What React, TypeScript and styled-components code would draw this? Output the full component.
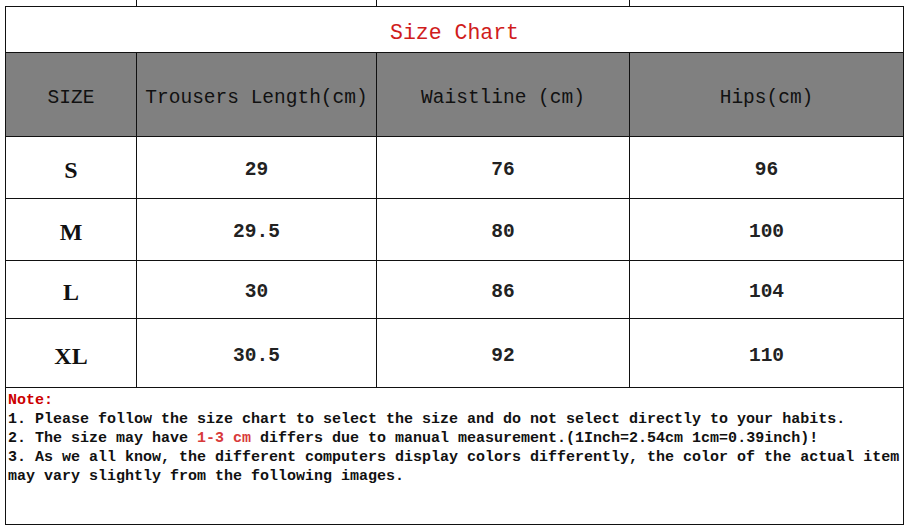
import React from "react";
import styled, { createGlobalStyle } from "styled-components";

const GlobalStyle = createGlobalStyle`
    html, body {
        margin: 0;
        padding: 0;
        background: #fff;
    }
`;

const rows = [
    { size: "S", length: "29", waist: "76", hips: "96", height: 62 },
    { size: "M", length: "29.5", waist: "80", hips: "100", height: 62 },
    { size: "L", length: "30", waist: "86", hips: "104", height: 58 },
    { size: "XL", length: "30.5", waist: "92", hips: "110", height: 69 },
];

const App = () => {
    return (
        <>
            <GlobalStyle />
            <Chart $rows={rows.map(r => r.height)}>
                <StripCell />
                <StripCell />
                <StripCell />
                <StripCell $last />

                <TitleCell>Size Chart</TitleCell>

                <HeadCell $first>SIZE</HeadCell>
                <HeadCell>Trousers Length(cm)</HeadCell>
                <HeadCell>Waistline (cm)</HeadCell>
                <HeadCell>Hips(cm)</HeadCell>

                {rows.map(r => (
                    <React.Fragment key={r.size}>
                        <SizeCell $first>{r.size}</SizeCell>
                        <ValueCell>{r.length}</ValueCell>
                        <ValueCell>{r.waist}</ValueCell>
                        <ValueCell>{r.hips}</ValueCell>
                    </React.Fragment>
                ))}

                <NoteCell>
                    <NoteHead>Note:</NoteHead>
                    <div>1. Please follow the size chart to select the size and do not select directly to your habits.</div>
                    <div>2. The size may have <Red>1-3 cm</Red> differs due to manual measurement.(1Inch=2.54cm 1cm=0.39inch)!</div>
                    <div>3. As we all know, the different computers display colors differently, the color of the actual item may vary slightly from the following images.</div>
                </NoteCell>
            </Chart>
        </>
    );
};

const Chart = styled.div<{ $rows: number[] }>`
    display: grid;
    grid-template-columns: 132px 240px 253px 274px;
    grid-template-rows: 7px 46px 84px ${props => props.$rows.map(h => `${h}px`).join(" ")} 137px;
    margin-left: 5px;
    width: 899px;
    font-family: "Liberation Mono", "DejaVu Sans Mono", monospace;
    color: #111;
`;

const Cell = styled.div<{ $first?: boolean; $last?: boolean }>`
    box-sizing: border-box;
    display: flex;
    align-items: center;
    justify-content: center;
    border-bottom: 1px solid #111;
    border-right: 1px solid #111;
    border-left: ${props => props.$first ? "1px solid #111" : "none"};
`;

const StripCell = styled(Cell)`
    border-right: ${props => props.$last ? "none" : "1px solid #111"};
`;

const TitleCell = styled(Cell)`
    grid-column: 1 / -1;
    border-left: 1px solid #111;
    padding-top: 6px;
    font-size: 21.5px;
    color: #d01c1c;
`;

const HeadCell = styled(Cell)`
    background-color: #808080;
    padding-top: 6px;
    font-size: 19.5px;
    color: #111;
    white-space: nowrap;
`;

const SizeCell = styled(Cell)`
    padding-top: 6px;
    font-family: "Liberation Serif", serif;
    font-size: 24px;
    font-weight: bold;
`;

const ValueCell = styled(Cell)`
    padding-top: 5px;
    font-size: 19.5px;
    font-weight: bold;
    color: #222;
`;

const NoteCell = styled(Cell)`
    grid-column: 1 / -1;
    border-left: 1px solid #111;
    flex-direction: column;
    align-items: stretch;
    justify-content: flex-start;
    padding: 3px 2px 0 2px;
    font-size: 15px;
    font-weight: bold;
    line-height: 19px;
    color: #111;
`;

const NoteHead = styled.div`
    color: #cc0000;
`;

const Red = styled.span`
    color: #d83a3a;
`;

export default App;
